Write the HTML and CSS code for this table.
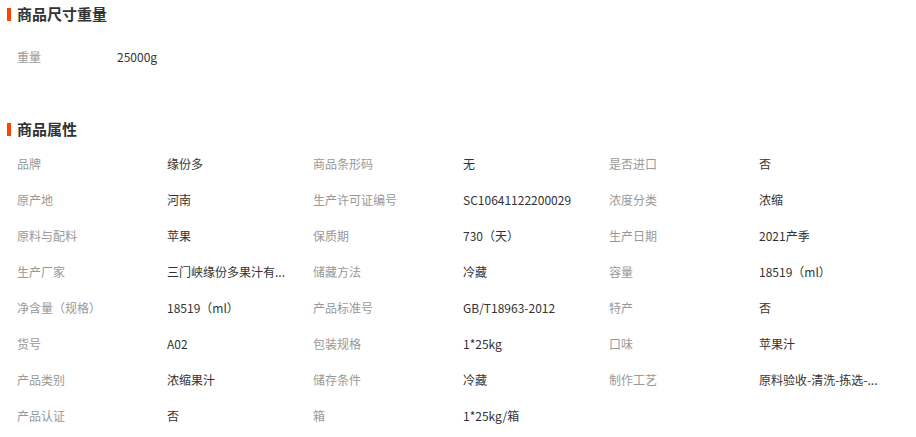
FILE: index.html
```html
<!DOCTYPE html>
<html lang="zh-CN">
<head>
  <meta charset="UTF-8">
  <title>商品参数</title>
  <link rel="stylesheet" href="styles.css">
</head>
<body>
  <section class="block">
    <h2 class="block-title">商品尺寸重量</h2>
    <div class="size-list">
      <div class="size-item">
        <span class="size-label">重量</span>
        <span class="size-value">25000g</span>
      </div>
    </div>
  </section>

  <section class="block block-attr">
    <h2 class="block-title">商品属性</h2>
    <div class="attr-list">
      <div class="attr"><span class="attr-label">品牌</span><span class="attr-value">缘份多</span></div>
      <div class="attr"><span class="attr-label">商品条形码</span><span class="attr-value">无</span></div>
      <div class="attr"><span class="attr-label">是否进口</span><span class="attr-value">否</span></div>

      <div class="attr"><span class="attr-label">原产地</span><span class="attr-value">河南</span></div>
      <div class="attr"><span class="attr-label">生产许可证编号</span><span class="attr-value">SC10641122200029</span></div>
      <div class="attr"><span class="attr-label">浓度分类</span><span class="attr-value">浓缩</span></div>

      <div class="attr"><span class="attr-label">原料与配料</span><span class="attr-value">苹果</span></div>
      <div class="attr"><span class="attr-label">保质期</span><span class="attr-value">730（天）</span></div>
      <div class="attr"><span class="attr-label">生产日期</span><span class="attr-value">2021产季</span></div>

      <div class="attr"><span class="attr-label">生产厂家</span><span class="attr-value">三门峡缘份多果汁有...</span></div>
      <div class="attr"><span class="attr-label">储藏方法</span><span class="attr-value">冷藏</span></div>
      <div class="attr"><span class="attr-label">容量</span><span class="attr-value">18519（ml）</span></div>

      <div class="attr"><span class="attr-label">净含量（规格）</span><span class="attr-value">18519（ml）</span></div>
      <div class="attr"><span class="attr-label">产品标准号</span><span class="attr-value">GB/T18963-2012</span></div>
      <div class="attr"><span class="attr-label">特产</span><span class="attr-value">否</span></div>

      <div class="attr"><span class="attr-label">货号</span><span class="attr-value">A02</span></div>
      <div class="attr"><span class="attr-label">包装规格</span><span class="attr-value">1*25kg</span></div>
      <div class="attr"><span class="attr-label">口味</span><span class="attr-value">苹果汁</span></div>

      <div class="attr"><span class="attr-label">产品类别</span><span class="attr-value">浓缩果汁</span></div>
      <div class="attr"><span class="attr-label">储存条件</span><span class="attr-value">冷藏</span></div>
      <div class="attr"><span class="attr-label">制作工艺</span><span class="attr-value">原料验收-清洗-拣选-...</span></div>

      <div class="attr"><span class="attr-label">产品认证</span><span class="attr-value">否</span></div>
      <div class="attr"><span class="attr-label">箱</span><span class="attr-value">1*25kg/箱</span></div>
    </div>
  </section>
</body>
</html>
```

FILE: styles.css
```css
body {
  margin: 0;
  font-family: "Noto Sans CJK SC", "Liberation Sans", sans-serif;
  font-size: 12px;
  color: #333;
  background-color: #fff;
}
.block {
  padding-top: 4px;
}
.block-attr {
  padding-top: 44px;
}
.block-title {
  display: flex;
  align-items: center;
  margin: 0;
  padding-left: 7px;
  height: 20px;
  line-height: 20px;
  font-size: 15px;
  font-weight: bold;
  color: #333;
}
.block-title::before {
  content: "";
  width: 4px;
  height: 13px;
  margin-right: 6px;
  background-color: #ff4400;
}
.size-list {
  margin-top: 15px;
  padding-left: 17px;
}
.size-item {
  display: flex;
  height: 36px;
  line-height: 36px;
}
.size-label {
  width: 100px;
  color: #999;
}
.attr-list {
  display: grid;
  grid-template-columns: repeat(3, 296px);
  margin-top: 7px;
  padding-left: 17px;
}
.attr {
  display: flex;
  height: 36px;
  line-height: 36px;
}
.attr-label {
  width: 150px;
  flex-shrink: 0;
  color: #999;
}
.attr-value {
  white-space: nowrap;
  color: #333;
}
```
